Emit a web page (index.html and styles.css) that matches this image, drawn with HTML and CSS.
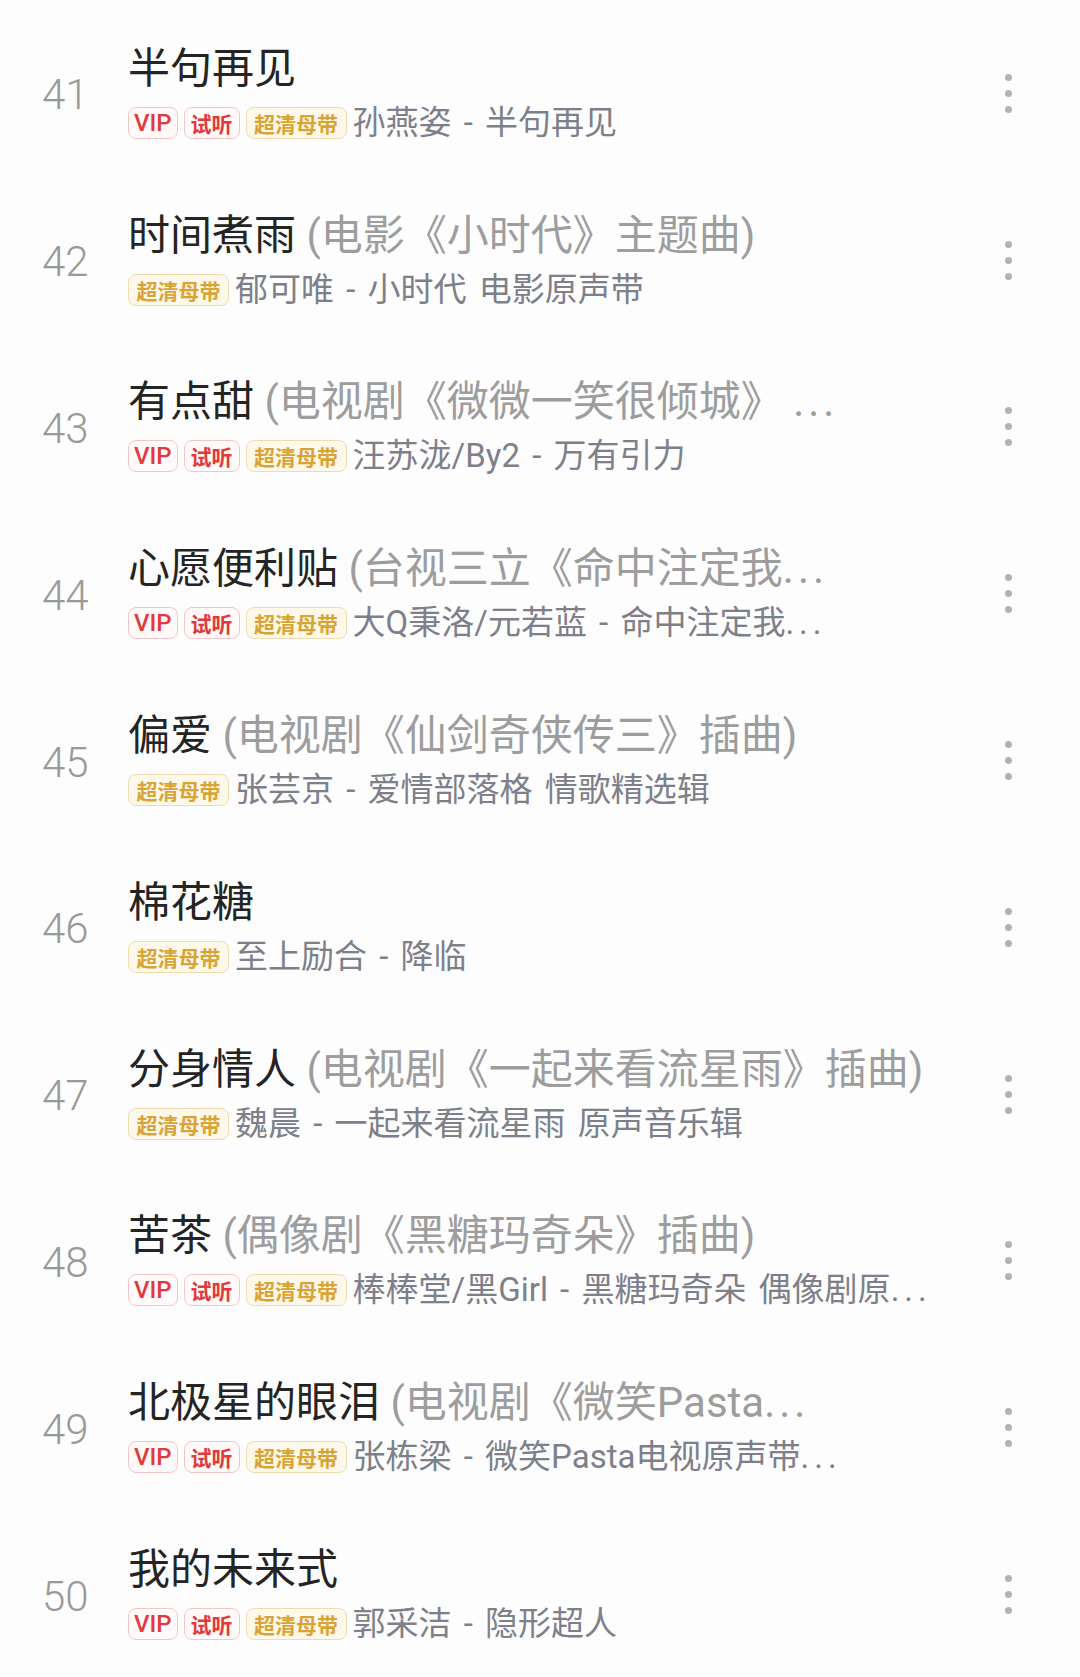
FILE: index.html
```html
<!DOCTYPE html>
<html lang="zh-CN">
<head>
<meta charset="utf-8">
<title>歌曲列表</title>
<link rel="stylesheet" href="styles.css">
</head>
<body>
<ul class="list">
  <li class="row">
    <span class="idx">41</span>
    <div class="info">
      <div class="title">半句再见</div>
      <div class="meta"><span class="tag tag-vip">VIP</span><span class="tag tag-try">试听</span><span class="tag tag-hq">超清母带</span><span class="artist">孙燕姿 - 半句再见</span></div>
    </div>
    <span class="more"><i></i><i></i><i></i></span>
  </li>
  <li class="row">
    <span class="idx">42</span>
    <div class="info">
      <div class="title">时间煮雨 <span class="extra">(电影《小时代》主题曲)</span></div>
      <div class="meta"><span class="tag tag-hq">超清母带</span><span class="artist">郁可唯 - 小时代 电影原声带</span></div>
    </div>
    <span class="more"><i></i><i></i><i></i></span>
  </li>
  <li class="row">
    <span class="idx">43</span>
    <div class="info">
      <div class="title">有点甜 <span class="extra">(电视剧《微微一笑很倾城》 <span class="ell">...</span></span></div>
      <div class="meta"><span class="tag tag-vip">VIP</span><span class="tag tag-try">试听</span><span class="tag tag-hq">超清母带</span><span class="artist">汪苏泷/By2 - 万有引力</span></div>
    </div>
    <span class="more"><i></i><i></i><i></i></span>
  </li>
  <li class="row">
    <span class="idx">44</span>
    <div class="info">
      <div class="title">心愿便利贴 <span class="extra">(台视三立《命中注定我<span class="ell">...</span></span></div>
      <div class="meta"><span class="tag tag-vip">VIP</span><span class="tag tag-try">试听</span><span class="tag tag-hq">超清母带</span><span class="artist">大Q秉洛/元若蓝 - 命中注定我<span class="ell">...</span></span></div>
    </div>
    <span class="more"><i></i><i></i><i></i></span>
  </li>
  <li class="row">
    <span class="idx">45</span>
    <div class="info">
      <div class="title">偏爱 <span class="extra">(电视剧《仙剑奇侠传三》插曲)</span></div>
      <div class="meta"><span class="tag tag-hq">超清母带</span><span class="artist">张芸京 - 爱情部落格 情歌精选辑</span></div>
    </div>
    <span class="more"><i></i><i></i><i></i></span>
  </li>
  <li class="row">
    <span class="idx">46</span>
    <div class="info">
      <div class="title">棉花糖</div>
      <div class="meta"><span class="tag tag-hq">超清母带</span><span class="artist">至上励合 - 降临</span></div>
    </div>
    <span class="more"><i></i><i></i><i></i></span>
  </li>
  <li class="row">
    <span class="idx">47</span>
    <div class="info">
      <div class="title">分身情人 <span class="extra">(电视剧《一起来看流星雨》插曲)</span></div>
      <div class="meta"><span class="tag tag-hq">超清母带</span><span class="artist">魏晨 - 一起来看流星雨 原声音乐辑</span></div>
    </div>
    <span class="more"><i></i><i></i><i></i></span>
  </li>
  <li class="row">
    <span class="idx">48</span>
    <div class="info">
      <div class="title">苦茶 <span class="extra">(偶像剧《黑糖玛奇朵》插曲)</span></div>
      <div class="meta"><span class="tag tag-vip">VIP</span><span class="tag tag-try">试听</span><span class="tag tag-hq">超清母带</span><span class="artist">棒棒堂/黑Girl - 黑糖玛奇朵 偶像剧原<span class="ell">...</span></span></div>
    </div>
    <span class="more"><i></i><i></i><i></i></span>
  </li>
  <li class="row">
    <span class="idx">49</span>
    <div class="info">
      <div class="title">北极星的眼泪 <span class="extra">(电视剧《微笑Pasta<span class="ell">...</span></span></div>
      <div class="meta"><span class="tag tag-vip">VIP</span><span class="tag tag-try">试听</span><span class="tag tag-hq">超清母带</span><span class="artist">张栋梁 - 微笑Pasta电视原声带<span class="ell">...</span></span></div>
    </div>
    <span class="more"><i></i><i></i><i></i></span>
  </li>
  <li class="row">
    <span class="idx">50</span>
    <div class="info">
      <div class="title">我的未来式</div>
      <div class="meta"><span class="tag tag-vip">VIP</span><span class="tag tag-try">试听</span><span class="tag tag-hq">超清母带</span><span class="artist">郭采洁 - 隐形超人</span></div>
    </div>
    <span class="more"><i></i><i></i><i></i></span>
  </li>
</ul>
</body>
</html>
```

FILE: styles.css
```css
html, body {
  margin: 0;
  padding: 0;
  background: #fdfdfd;
}

body {
  font-family: "Roboto", "Noto Sans CJK SC", sans-serif;
  -webkit-font-smoothing: antialiased;
}

.list {
  list-style: none;
  margin: 0;
  padding: 10px 0 0 0;
}

.row {
  display: flex;
  align-items: center;
  height: 166.8px;
  padding: 0 68px 0 42px;
  box-sizing: border-box;
}

.idx {
  flex: 0 0 86px;
  padding-top: 4px;
  font-size: 42px;
  font-weight: 300;
  color: #999999;
  line-height: 1;
}

.info {
  flex: 1;
  min-width: 0;
  padding-bottom: 1px;
}

.title {
  font-size: 42px;
  line-height: 52px;
  color: #242424;
  white-space: nowrap;
}

.extra {
  color: #9d9d9d;
}

.ell {
  letter-spacing: 4px;
}

.meta {
  display: flex;
  align-items: center;
  gap: 6px;
  margin-top: 8px;
  height: 40px;
  white-space: nowrap;
}

.tag {
  box-sizing: border-box;
  height: 32px;
  line-height: 30px;
  padding: 0 6px;
  border: 1px solid;
  border-radius: 8px;
  font-size: 21px;
  font-weight: 700;
  font-family: "Noto Sans CJK SC", sans-serif;
}

.tag-vip {
  font-family: "Roboto", "Noto Sans CJK SC", sans-serif;
  font-size: 24px;
  font-weight: 500;
  padding: 0 5px;
}

.tag-vip,
.tag-try {
  color: #e2393b;
  border-color: #f2c6c6;
  background: #fff9f9;
}

.tag-hq {
  padding: 0 7.5px;
  color: #d9a435;
  border-color: #eedcb0;
  background: #fdf8ea;
}

.artist {
  font-size: 33px;
  line-height: 40px;
  word-spacing: 4px;
  color: #7d808a;
}

.artist .ell {
  letter-spacing: 5px;
}

.more {
  flex: 0 0 7px;
  display: flex;
  flex-direction: column;
  gap: 9px;
}

.more i {
  display: block;
  width: 7px;
  height: 7px;
  border-radius: 50%;
  background: #b2b2b2;
}
```
